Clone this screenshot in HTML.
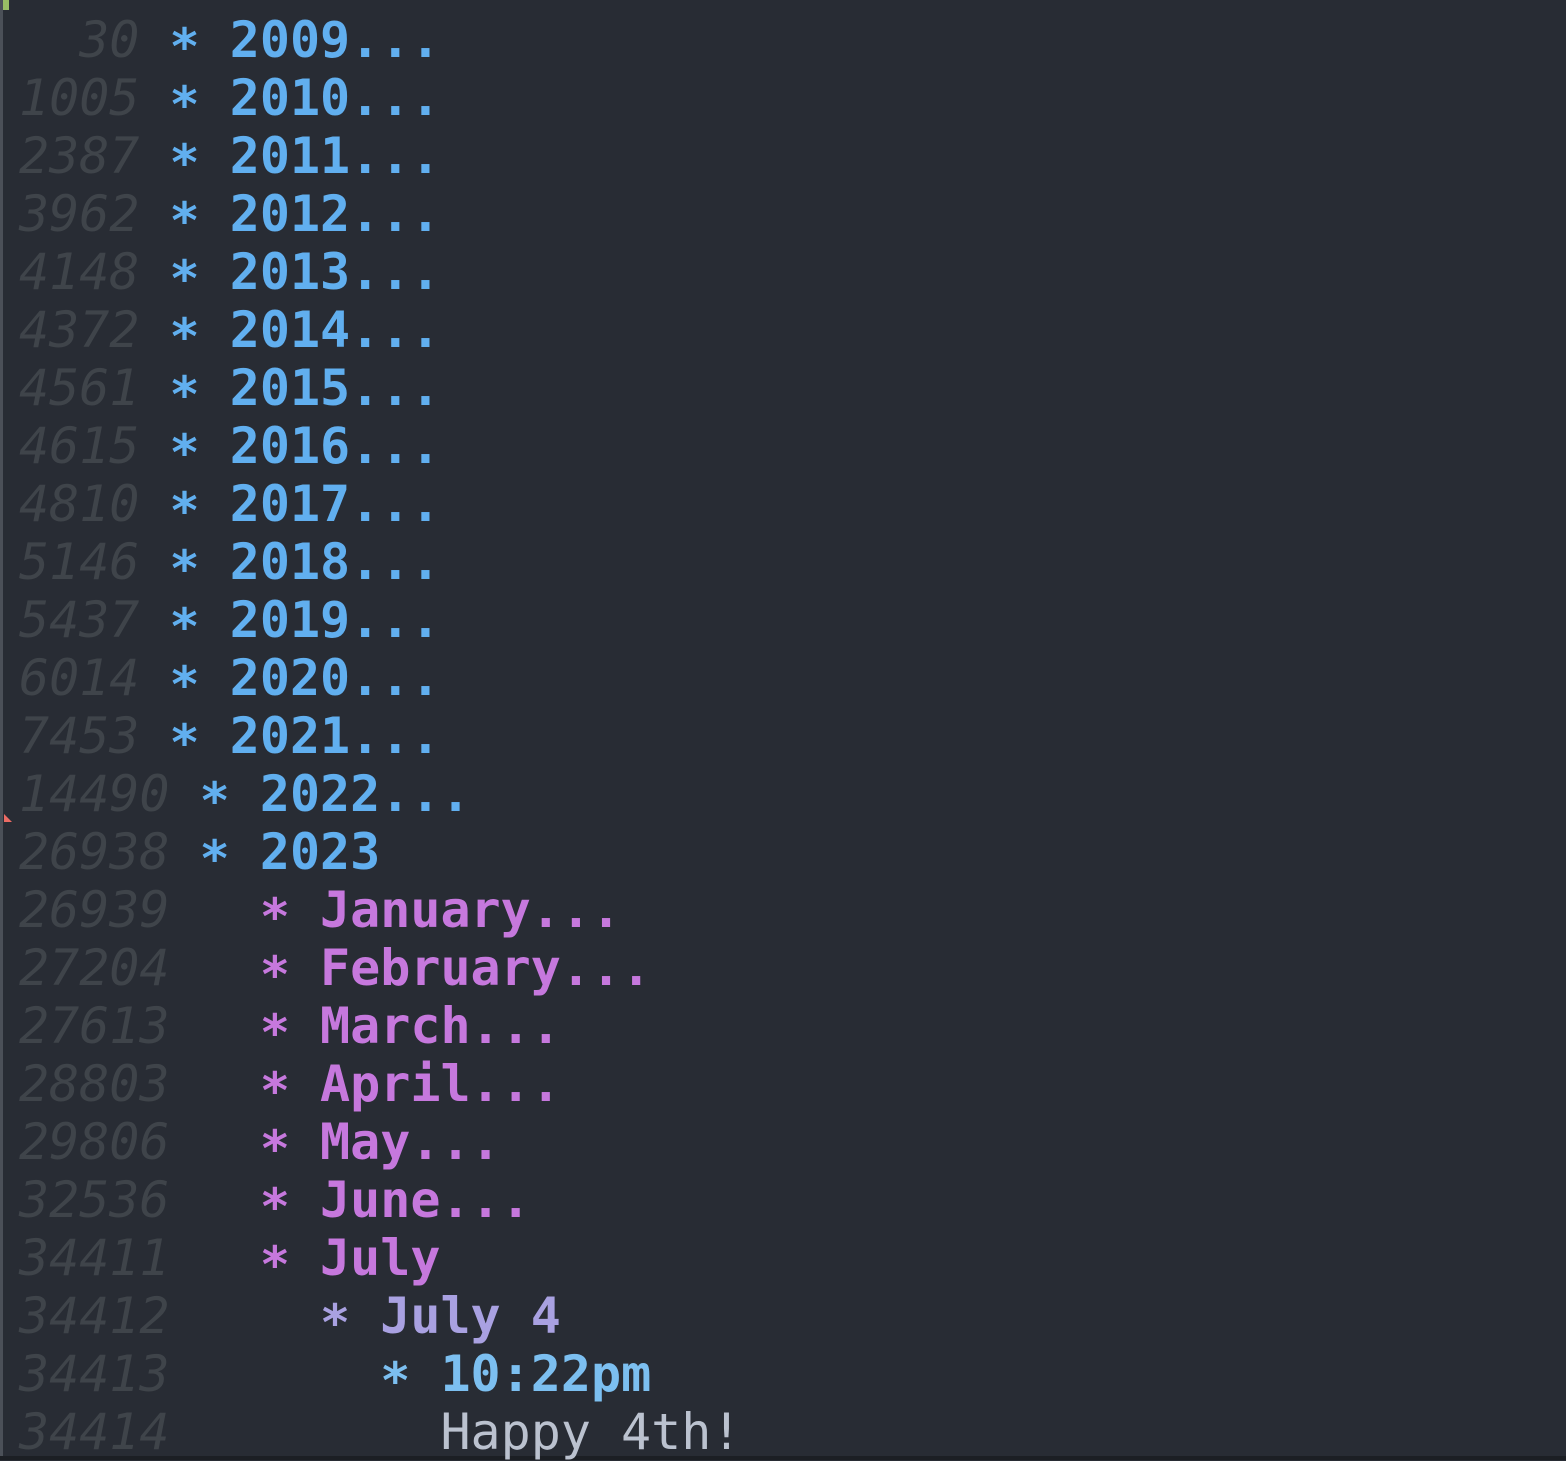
<!DOCTYPE html>
<html><head><style>
html,body{margin:0;padding:0;background:#282c34;width:1566px;height:1460px;overflow:hidden}
.bar{position:absolute;left:0;top:0;width:3px;height:1460px;background:#4b5058}
.g{position:absolute;left:3px;top:0;width:6px;height:10px;background:#98be65}
.r{position:absolute;left:4px;top:814px;width:0;height:0;border-left:8px solid #ec6b64;border-top:8px solid transparent}
.bot{position:absolute;left:0;top:1456px;width:1566px;height:4px;background:#1c1f24}
pre{position:absolute;left:19px;top:11px;margin:0;font-family:"DejaVu Sans Mono","Liberation Mono",monospace;font-size:50px;line-height:58px;color:#bbc2cf}
.n{color:#3f444a;font-style:italic}
.b{color:#61afef;font-weight:bold}
.p{color:#c678dd;font-weight:bold}
.l{color:#a9a1e1;font-weight:bold}
.c{color:#7cbff0;font-weight:bold}
.sb,.sp,.sl,.sc{font-weight:bold;position:relative;top:7px}
.sb{color:#61afef}.sp{color:#c678dd}.sl{color:#a9a1e1}.sc{color:#7cbff0}
</style></head><body>
<div class="bar"></div><div class="g"></div><div class="r"></div><div class="bot"></div>
<pre><span class="n">  30</span> <span class="sb">*</span> <span class="b">2009...</span>
<span class="n">1005</span> <span class="sb">*</span> <span class="b">2010...</span>
<span class="n">2387</span> <span class="sb">*</span> <span class="b">2011...</span>
<span class="n">3962</span> <span class="sb">*</span> <span class="b">2012...</span>
<span class="n">4148</span> <span class="sb">*</span> <span class="b">2013...</span>
<span class="n">4372</span> <span class="sb">*</span> <span class="b">2014...</span>
<span class="n">4561</span> <span class="sb">*</span> <span class="b">2015...</span>
<span class="n">4615</span> <span class="sb">*</span> <span class="b">2016...</span>
<span class="n">4810</span> <span class="sb">*</span> <span class="b">2017...</span>
<span class="n">5146</span> <span class="sb">*</span> <span class="b">2018...</span>
<span class="n">5437</span> <span class="sb">*</span> <span class="b">2019...</span>
<span class="n">6014</span> <span class="sb">*</span> <span class="b">2020...</span>
<span class="n">7453</span> <span class="sb">*</span> <span class="b">2021...</span>
<span class="n">14490</span> <span class="sb">*</span> <span class="b">2022...</span>
<span class="n">26938</span> <span class="sb">*</span> <span class="b">2023</span>
<span class="n">26939</span>   <span class="sp">*</span> <span class="p">January...</span>
<span class="n">27204</span>   <span class="sp">*</span> <span class="p">February...</span>
<span class="n">27613</span>   <span class="sp">*</span> <span class="p">March...</span>
<span class="n">28803</span>   <span class="sp">*</span> <span class="p">April...</span>
<span class="n">29806</span>   <span class="sp">*</span> <span class="p">May...</span>
<span class="n">32536</span>   <span class="sp">*</span> <span class="p">June...</span>
<span class="n">34411</span>   <span class="sp">*</span> <span class="p">July</span>
<span class="n">34412</span>     <span class="sl">*</span> <span class="l">July 4</span>
<span class="n">34413</span>       <span class="sc">*</span> <span class="c">10:22pm</span>
<span class="n">34414</span>         Happy 4th!</pre>
</body></html>
